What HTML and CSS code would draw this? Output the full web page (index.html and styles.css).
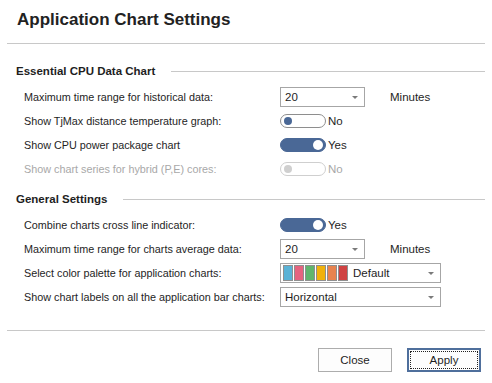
FILE: index.html
```html
<!DOCTYPE html>
<html lang="en">
<head>
  <meta charset="UTF-8" />
  <title>Application Chart Settings</title>
  <link rel="stylesheet" href="styles.css">
</head>
<body>
  <div class="dialogo">
    <h1 class="titulo">Application Chart Settings</h1>
    <div class="linea"></div>

    <div class="seccion">
      <div class="encabezado"><span>Essential CPU Data Chart</span><i></i></div>

      <div class="fila">
        <label>Maximum time range for historical data:</label>
        <div class="control">
          <div class="combo corto"><span>20</span><b class="flecha"></b></div>
          <span class="unidad">Minutes</span>
        </div>
      </div>

      <div class="fila">
        <label>Show TjMax distance temperature graph:</label>
        <div class="control">
          <div class="interruptor"><i></i></div><span class="texto">No</span>
        </div>
      </div>

      <div class="fila">
        <label>Show CPU power package chart</label>
        <div class="control">
          <div class="interruptor activo"><i></i></div><span class="texto">Yes</span>
        </div>
      </div>

      <div class="fila apagada">
        <label>Show chart series for hybrid (P,E) cores:</label>
        <div class="control">
          <div class="interruptor inactivo"><i></i></div><span class="texto">No</span>
        </div>
      </div>
    </div>

    <div class="seccion">
      <div class="encabezado"><span>General Settings</span><i></i></div>

      <div class="fila">
        <label>Combine charts cross line indicator:</label>
        <div class="control">
          <div class="interruptor activo"><i></i></div><span class="texto">Yes</span>
        </div>
      </div>

      <div class="fila">
        <label>Maximum time range for charts average data:</label>
        <div class="control">
          <div class="combo corto"><span>20</span><b class="flecha"></b></div>
          <span class="unidad">Minutes</span>
        </div>
      </div>

      <div class="fila">
        <label>Select color palette for application charts:</label>
        <div class="control">
          <div class="combo largo">
            <div class="paleta">
              <i class="c1"></i><i class="c2"></i><i class="c3"></i><i class="c4"></i><i class="c5"></i><i class="c6"></i>
            </div>
            <span class="nombre">Default</span>
            <b class="flecha"></b>
          </div>
        </div>
      </div>

      <div class="fila">
        <label>Show chart labels on all the application bar charts:</label>
        <div class="control">
          <div class="combo largo"><span>Horizontal</span><b class="flecha"></b></div>
        </div>
      </div>
    </div>

    <div class="linea abajo"></div>

    <div class="botones">
      <button class="boton">Close</button>
      <button class="boton principal"><span>Apply</span></button>
    </div>
  </div>
</body>
</html>
```

FILE: styles.css
```css
* { margin: 0; padding: 0; box-sizing: border-box; }

body {
  background: #fff;
  font-family: 'Liberation Sans', Arial, sans-serif;
  font-size: 10.8px;
  color: #1e1e1e;
}

.dialogo {
  width: 492px;
  height: 383px;
}

.titulo {
  font-size: 17px;
  font-weight: bold;
  color: #222;
  padding: 10px 0 0 17px;
  height: 43px;
}

.linea {
  height: 1px;
  background: #c8c8c8;
  margin: 0 7px;
}

.seccion {
  padding: 0 7px 0 16px;
}

.encabezado {
  display: flex;
  align-items: center;
  height: 28px;
  margin-top: 13px;
  font-weight: bold;
  font-size: 11.5px;
}

.seccion + .seccion .encabezado {
  margin-top: 4px;
}

.encabezado i {
  flex: 1;
  height: 1px;
  background: #c8c8c8;
  margin-left: 16px;
}

.fila {
  display: grid;
  grid-template-columns: 256px 1fr;
  align-items: center;
  height: 24px;
  padding-left: 8px;
}

.fila label {
  white-space: nowrap;
}

.fila.apagada label,
.fila.apagada .texto {
  color: #a8a8a8;
}

.control {
  display: flex;
  align-items: center;
  font-size: 11.5px;
}

.combo {
  display: flex;
  align-items: center;
  height: 20px;
  border: 1px solid #a6a6a6;
  background: #fff;
  padding: 0 6px 0 4px;
}

.combo.corto { width: 85px; }
.combo.largo { width: 161px; }

.combo > span:first-child { flex: 1; }

.flecha {
  width: 0;
  height: 0;
  border-left: 3px solid transparent;
  border-right: 3px solid transparent;
  border-top: 3px solid #7a7a7a;
  margin-left: auto;
}

.unidad {
  margin-left: 25px;
}

.interruptor {
  width: 46px;
  height: 14px;
  border: 1px solid #8e8e8e;
  border-radius: 7px;
  background: #fff;
  position: relative;
}

.interruptor i {
  position: absolute;
  top: 2px;
  left: 3px;
  width: 8px;
  height: 8px;
  border-radius: 50%;
  background: #4a6896;
}

.interruptor.activo {
  background: #4a6896;
  border-color: #4a6896;
}

.interruptor.activo i {
  left: auto;
  right: 2px;
  top: 1px;
  width: 10px;
  height: 10px;
  background: #fff;
}

.interruptor.inactivo {
  border-color: #cfcfcf;
}

.interruptor.inactivo i {
  background: #cfcfcf;
}

.texto {
  margin-left: 2px;
}

.paleta {
  display: flex;
  gap: 1px;
  margin-left: -2px;
}

.paleta i {
  width: 10px;
  height: 16px;
  border: 1px solid #8f8f8f;
}

.c1 { background: #5ab2d6; }
.c2 { background: #e5637f; }
.c3 { background: #5fb56d; }
.c4 { background: #f0b10c; }
.c5 { background: #e8834f; }
.c6 { background: #cf4242; }

.nombre {
  margin-left: 5px;
}

.linea.abajo {
  margin-top: 21px;
}

.botones {
  display: flex;
  justify-content: flex-end;
  gap: 15px;
  padding: 17px 11px 0 0;
}

.boton {
  width: 74px;
  height: 24px;
  border: 1px solid #adadad;
  background: #fdfdfd;
  font-family: inherit;
  font-size: 11.5px;
  color: #1e1e1e;
}

.boton.principal {
  border: 2px solid #4f6f9c;
  padding: 1px;
}

.boton.principal span {
  display: flex;
  align-items: center;
  justify-content: center;
  height: 100%;
  border: 1px dotted #222;
}
```
